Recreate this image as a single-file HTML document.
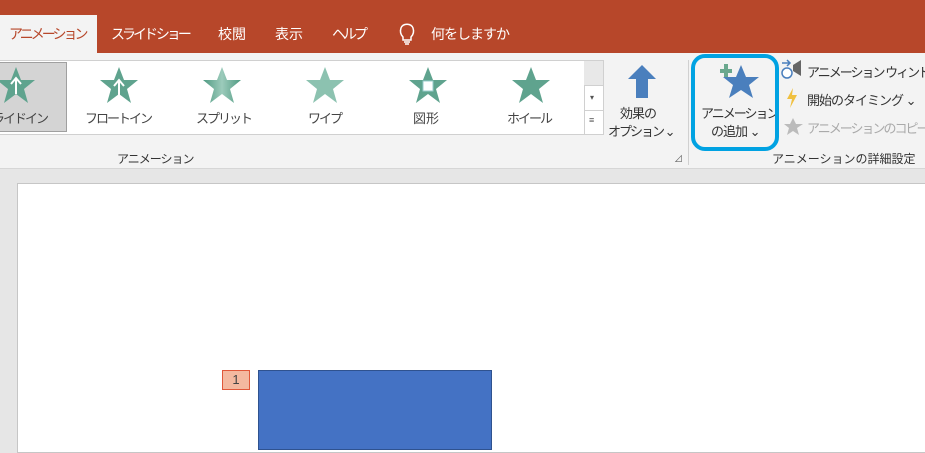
<!DOCTYPE html>
<html><head><meta charset="utf-8"><style>
*{margin:0;padding:0;box-sizing:border-box}
body{width:925px;height:447px;overflow:hidden;background:#e6e6e6;font-family:"Liberation Sans","Noto Sans CJK JP",sans-serif;position:relative;color:#262626}
.a{position:absolute;white-space:nowrap}
#tabs{left:0;top:0;width:925px;height:53px;background:#b7472a}
.tab{position:absolute;top:24px;font-size:14px;color:#fff}
.k{letter-spacing:-3px}
#rib{left:0;top:53px;width:925px;height:116px;background:#f3f3f3;border-bottom:1px solid #d6d6d6}
.lbl{font-size:13px;color:#444;letter-spacing:-2px}
</style></head><body>
<div class="a" id="tabs"></div>
<div class="a" style="left:0;top:15px;width:97px;height:40px;background:#f3f3f3"></div>
<div class="a tab k" style="left:9px;color:#b7472a">アニメーション</div>
<div class="a tab k" style="left:111px">スライド ショー</div>
<div class="a tab" style="left:218px">校閲</div>
<div class="a tab" style="left:275px">表示</div>
<div class="a tab k" style="left:332px">ヘルプ</div>
<svg class="a" style="left:398px;top:22px" width="18" height="24" viewBox="0 0 18 24"><path d="M5 15 C2 12 2 9 3 6 C5 1 13 1 15 6 C16 9 16 12 13 15 L13 18 L5 18 Z M6 20 H12 M7 22 H11" fill="none" stroke="#fff" stroke-width="1.5"/></svg>
<div class="a tab" style="left:431px;letter-spacing:-1px">何をしますか</div>
<div class="a" id="rib"></div>
<div class="a" style="left:0;top:60px;width:604px;height:75px;background:#fff;border:1px solid #d0d0d0;border-left:none"></div>
<div class="a" style="left:0;top:62px;width:67px;height:70px;background:#d4d4d4;border:1px solid #a0a0a0;border-left:none"></div>
<div class="a" style="left:584px;top:61px;width:19px;height:73px;border-left:1px solid #d0d0d0"></div>
<div class="a" style="left:584px;top:61px;width:19px;height:25px;background:#e8e8e8;border-bottom:1px solid #d0d0d0"></div>
<div class="a" style="left:584px;top:110px;width:19px;height:1px;background:#d0d0d0"></div>
<div class="a" style="left:590px;top:93px;font-size:8px;color:#555">▾</div>
<div class="a" style="left:589px;top:115px;font-size:9px;color:#555">≡</div>
<svg width="0" height="0" style="position:absolute"><defs><linearGradient id="g" x1="0" x2="1"><stop offset="0" stop-color="#4f9a82"/><stop offset=".5" stop-color="#9ccbbb"/><stop offset="1" stop-color="#4f9a82"/></linearGradient></defs></svg>
<svg class="a" style="left:-4px;top:66px" width="40" height="38" viewBox="0 0 40 38"><polygon points="20,1 25,14 39,14 28,23 32,37 20,28 8,37 12,23 1,14 15,14" fill="#5fa38e"/><path d="M20 12 V28 M15 18 L20 12 L25 18" stroke="#fff" stroke-width="2" fill="none"/></svg>
<svg class="a" style="left:99px;top:66px" width="40" height="38" viewBox="0 0 40 38"><polygon points="20,1 25,14 39,14 28,23 32,37 20,28 8,37 12,23 1,14 15,14" fill="#5fa38e"/><path d="M20 14 V32 M15 20 L20 14 L25 20" stroke="#fff" stroke-width="2" fill="none"/></svg>
<svg class="a" style="left:202px;top:66px" width="40" height="38" viewBox="0 0 40 38"><polygon points="20,1 25,14 39,14 28,23 32,37 20,28 8,37 12,23 1,14 15,14" fill="url(#g)"/></svg>
<svg class="a" style="left:305px;top:66px" width="40" height="38" viewBox="0 0 40 38"><polygon points="20,1 25,14 39,14 28,23 32,37 20,28 8,37 12,23 1,14 15,14" fill="#8cc2b0"/></svg>
<svg class="a" style="left:408px;top:66px" width="40" height="38" viewBox="0 0 40 38"><polygon points="20,1 25,14 39,14 28,23 32,37 20,28 8,37 12,23 1,14 15,14" fill="#5fa38e"/><rect x="15" y="15" width="10" height="10" fill="#fff" stroke="#9cc" /></svg>
<svg class="a" style="left:511px;top:66px" width="40" height="38" viewBox="0 0 40 38"><polygon points="20,1 25,14 39,14 28,23 32,37 20,28 8,37 12,23 1,14 15,14" fill="#5fa38e"/></svg>
<div class="a lbl" style="left:-8px;top:108px">ライドイン</div>
<div class="a lbl" style="left:85px;top:108px">フロートイン</div>
<div class="a lbl" style="left:196px;top:108px">スプリット</div>
<div class="a lbl" style="left:308px;top:108px">ワイプ</div>
<div class="a lbl" style="left:413px;top:108px;letter-spacing:0">図形</div>
<div class="a lbl" style="left:507px;top:108px">ホイール</div>
<div class="a" style="left:117px;top:150px;font-size:12px;color:#333;letter-spacing:-1px">アニメーション</div>
<svg class="a" style="left:626px;top:63px" width="32" height="36" viewBox="0 0 32 36"><path d="M16 2 L30 16 L22 16 L22 35 L10 35 L10 16 L2 16 Z" fill="#4a7fbd"/></svg>
<div class="a lbl" style="left:620px;top:103px;color:#333;letter-spacing:-1px">効果の</div>
<div class="a lbl" style="left:608px;top:121px;color:#333">オプション ⌄</div>
<div class="a" style="left:674px;top:152px;font-size:9px;color:#666">⊿</div>
<div class="a" style="left:688px;top:60px;width:1px;height:105px;background:#d0d0d0"></div>
<svg class="a" style="left:717px;top:62px" width="44" height="38" viewBox="0 0 44 38"><polygon points="24,3 29,15 42,15 32,23 36,36 24,28 12,36 16,23 6,15 19,15" fill="#4a7fbd"/><path d="M3 9 H15 M9 2 V15" stroke="#6aa88e" stroke-width="4"/></svg>
<div class="a lbl" style="left:701px;top:103px;color:#333">アニメーション</div>
<div class="a lbl" style="left:711px;top:121px;color:#333;letter-spacing:-1px">の追加 ⌄</div>
<div class="a" style="left:691px;top:54px;width:88px;height:97px;border:4px solid #00a2e2;border-radius:14px"></div>
<svg class="a" style="left:781px;top:58px" width="22" height="22" viewBox="0 0 22 22"><path d="M12 7 L20 2 V18 L12 13 Z" fill="#666"/><circle cx="6" cy="15" r="5" fill="#fff" stroke="#4a7fbd" stroke-width="1.5"/><path d="M1 5 H9 M6 2 L9 5 L6 8" stroke="#4a7fbd" stroke-width="1.5" fill="none"/></svg>
<div class="a lbl" style="left:807px;top:62px;color:#333">アニメーション ウィンドウ</div>
<svg class="a" style="left:785px;top:87px" width="14" height="22" viewBox="0 0 14 22"><path d="M8 1 L2 12 H7 L5 21 L12 8 H7 Z" fill="#f0c040"/></svg>
<div class="a lbl" style="left:807px;top:90px;color:#333;letter-spacing:-1px">開始のタイミング ⌄</div>
<svg class="a" style="left:783px;top:117px" width="22" height="20" viewBox="0 0 22 20"><polygon points="10,1 13,7 20,7 14,11 16,18 10,14 4,18 6,11 1,7 7,7" fill="#bbb"/></svg>
<div class="a lbl" style="left:807px;top:118px;color:#aaa">アニメーションのコピー</div>
<div class="a" style="left:772px;top:150px;font-size:12px;color:#333">アニメーションの詳細設定</div>
<div class="a" style="left:17px;top:183px;width:920px;height:270px;background:#fff;border:1px solid #c6c6c6"></div>
<div class="a" style="left:222px;top:370px;width:28px;height:20px;background:#f4b9a0;border:1px solid #e0583a;font-size:13px;text-align:center;line-height:18px;color:#444">1</div>
<div class="a" style="left:258px;top:370px;width:234px;height:80px;background:#4472c4;border:1px solid #2f528f"></div>
</body></html>
